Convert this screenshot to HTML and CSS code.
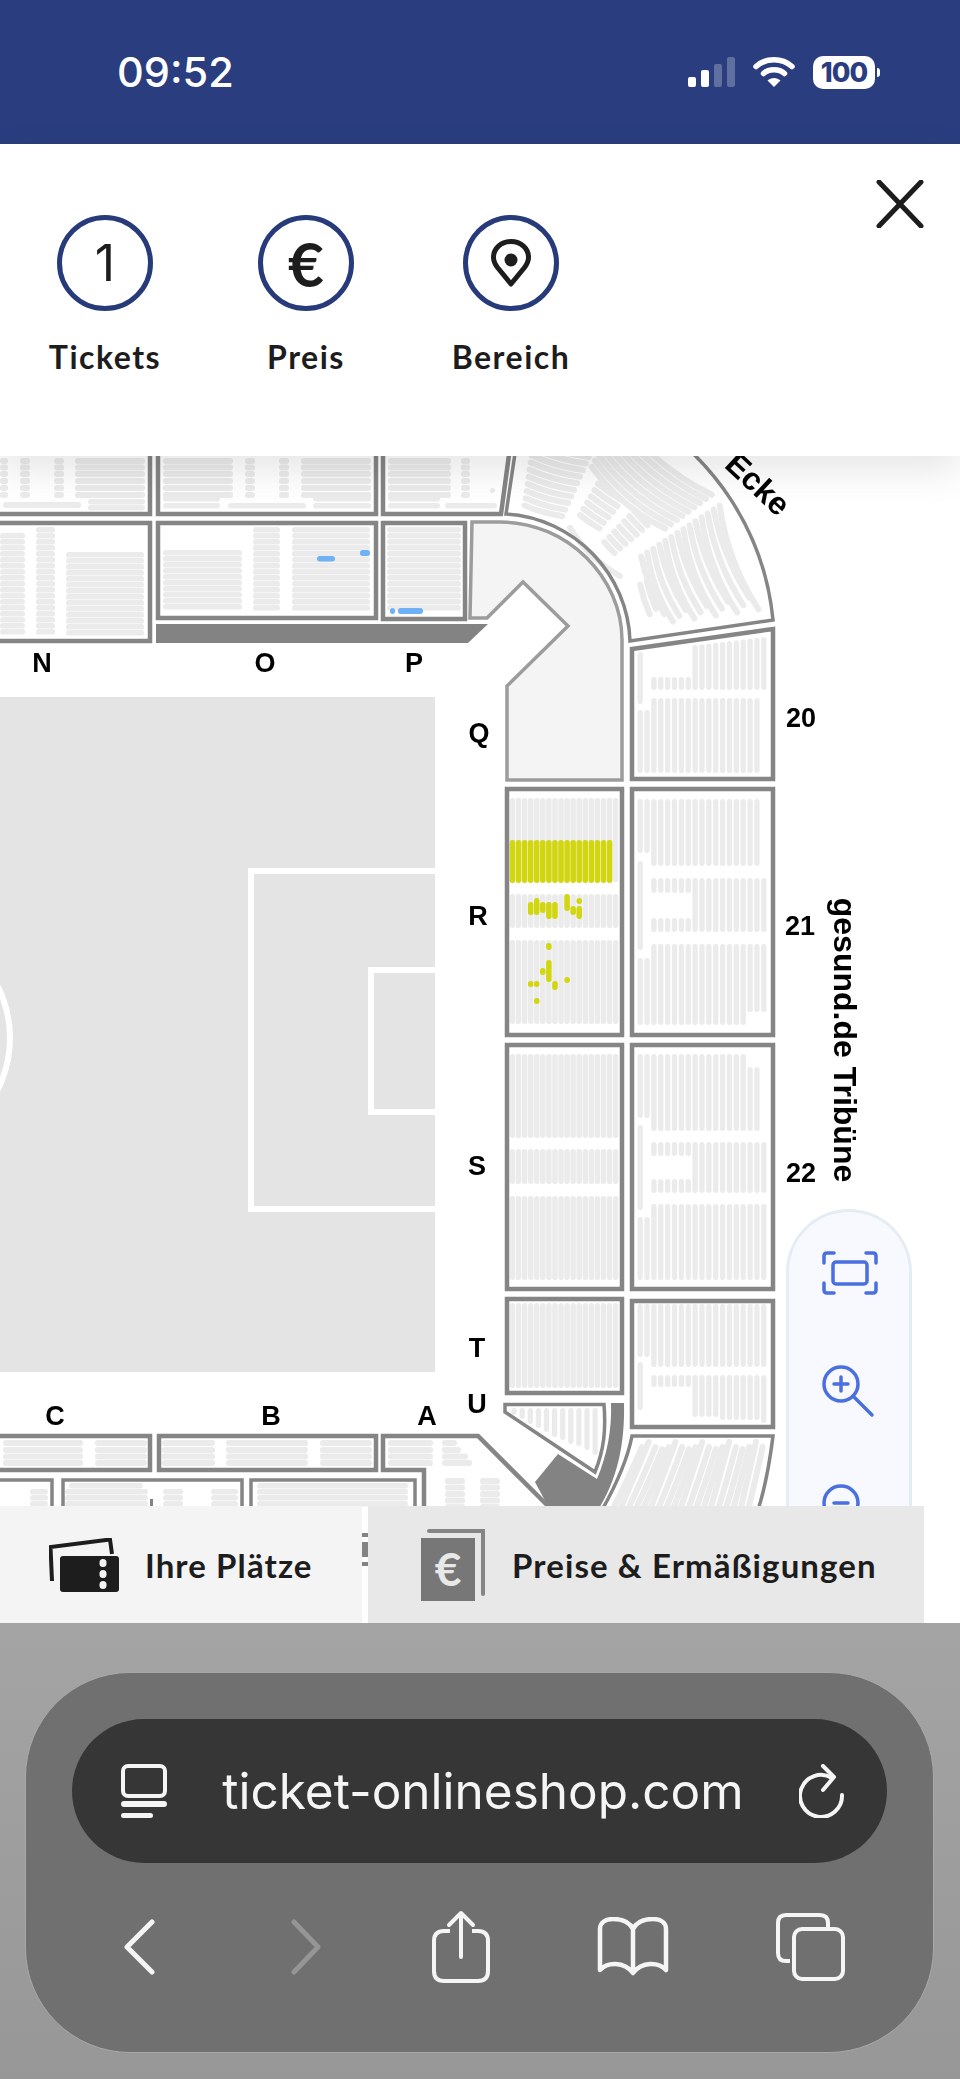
FILE: index.html

```html
<!DOCTYPE html>
<html lang="de">

<head>
  <meta charset="UTF-8">
  <meta name="viewport" content="width=device-width, initial-scale=1.0">
  <title>Saalplan</title>
  <link rel="stylesheet" href="styles.css">
</head>

<body>
  <header class="status-bar">
    <span class="status-time">09:52</span>
    <div class="status-icons">
      <svg class="signal" width="47" height="30" viewBox="0 0 47 30">
        <rect x="0" y="20" width="8" height="10" rx="2" fill="#fff"/>
        <rect x="13" y="13" width="8" height="17" rx="2" fill="#fff"/>
        <rect x="26" y="7" width="8" height="23" rx="2" fill="#5f6f9f"/>
        <rect x="39" y="0" width="8" height="30" rx="2" fill="#5f6f9f"/>
      </svg>
      <svg class="wifi" width="42" height="30" viewBox="0 0 42 30">
        <path d="M3 9.5C13 0.5 29 0.5 39 9.5" fill="none" stroke="#fff" stroke-width="5.5" stroke-linecap="round"/>
        <path d="M10.5 16.5C16 11.5 26 11.5 31.5 16.5" fill="none" stroke="#fff" stroke-width="5.5" stroke-linecap="round"/>
        <path d="M14.5 23.5C18 20 24 20 27.5 23.5L21 30Z" fill="#fff"/>
      </svg>
      <div class="battery">100</div>
    </div>
  </header>

  <section class="filter-panel">
    <div class="filters">
      <div class="filter">
        <div class="filter-circle"><span class="filter-count">1</span></div>
        <span class="filter-label">Tickets</span>
      </div>
      <div class="filter">
        <div class="filter-circle"><span class="filter-euro">€</span></div>
        <span class="filter-label">Preis</span>
      </div>
      <div class="filter">
        <div class="filter-circle">
          <svg width="40" height="48" viewBox="0 0 40 48">
            <path d="M20 45L6.5 28.5C3.5 24.5 2.5 21.5 2.5 18.5C2.5 9.5 10 2.5 20 2.5C30 2.5 37.5 9.5 37.5 18.5C37.5 21.5 36.5 24.5 33.5 28.5Z" fill="none" stroke="#1d1d1d" stroke-width="5" stroke-linejoin="round"/>
            <circle cx="20" cy="21" r="6.5" fill="#1d1d1d"/>
          </svg>
        </div>
        <span class="filter-label">Bereich</span>
      </div>
    </div>
    <svg class="close-icon" width="48" height="48" viewBox="0 0 48 48">
      <path d="M3 2L45 46M45 2L3 46" fill="none" stroke="#1d1d1d" stroke-width="5" stroke-linecap="round"/>
    </svg>
  </section>

  <main class="map">
    <svg class="map-svg" width="960" height="1167" viewBox="0 456 960 1167">
      <rect class="pitch" x="-10" y="697" width="445" height="675"/>
      <circle class="pitch-line" cx="-105" cy="1038" r="115"/>
      <rect class="pitch-line" x="251" y="871" width="190" height="338"/>
      <rect class="pitch-line" x="371" y="970" width="70" height="142"/>

      <g id="seats"></g>

      <!-- top stand -->
      <rect class="block" x="-10" y="440" width="160" height="74"/>
      <rect class="block" x="158" y="440" width="218" height="74"/>
      <path class="block" d="M383 440V514H501L511 440"/>
      <rect class="block" x="-10" y="523" width="160" height="118"/>
      <rect class="block" x="158" y="523" width="218" height="95"/>
      <rect class="block" x="383" y="523" width="82" height="96"/>
      <polygon class="dark" points="156,624 488,624 468,643 156,643"/>

      <!-- corner -->
      <path class="section-q" d="M472 522H500C568 522 622 578 622 640V780H507V686L568 626L523 582L487 618H470Z"/>
      <path class="block thin" d="M517 440L506 514C575 518 628 575 630 641L773 620A268 268 0 0 0 639 413"/>

      <!-- long side -->
      <path class="block" d="M632 649L773 629V779H632Z"/>
      <rect class="block" x="632" y="789" width="141" height="246"/>
      <rect class="block" x="632" y="1045" width="141" height="244"/>
      <rect class="block" x="632" y="1301" width="141" height="126"/>
      <rect class="block" x="507" y="789" width="115" height="246"/>
      <rect class="block" x="507" y="1045" width="115" height="244"/>
      <rect class="block" x="507" y="1299" width="115" height="94"/>

      <!-- bottom corner -->
      <path class="block thin" d="M505 1404.5H604C606 1430 604 1450 595 1472L505 1412Z"/>
      <path class="dark" d="M611 1403H624C625 1445 617 1480 598 1510H550L535 1482L558 1454L597 1479C607 1455 612 1430 611 1403Z"/>
      <path class="block thin" d="M602 1510C616 1485 627 1462 632 1436H773C770 1460 766 1485 758 1510"/>

      <!-- bottom stand -->
      <rect class="block" x="-10" y="1436" width="160" height="34"/>
      <rect class="block" x="159" y="1436" width="217" height="34"/>
      <path class="block" d="M550 1508L478 1436H383V1470H424V1520"/>
      <path class="block thin" d="M-10 1480H52V1520"/>
      <path class="block thin" d="M63 1520V1480H242V1520"/>
      <path class="block thin" d="M251 1520V1480H415V1520"/>
      <rect class="dark" x="150" y="1499" width="3" height="10"/>
      <rect class="dark" x="362" y="1533" width="6" height="4"/>
      <rect class="dark" x="362" y="1542" width="6" height="15"/>
      <rect class="dark" x="362" y="1562" width="6" height="4"/>

      <text class="map-label" x="42" y="672">N</text>
      <text class="map-label" x="265" y="672">O</text>
      <text class="map-label" x="414" y="672">P</text>
      <text class="map-label" x="479" y="742">Q</text>
      <text class="map-label" x="478" y="925">R</text>
      <text class="map-label" x="477" y="1175">S</text>
      <text class="map-label" x="477" y="1357">T</text>
      <text class="map-label" x="477" y="1413">U</text>
      <text class="map-label" x="55" y="1425">C</text>
      <text class="map-label" x="271" y="1425">B</text>
      <text class="map-label" x="427" y="1425">A</text>
      <text class="map-label" x="801" y="727">20</text>
      <text class="map-label" x="800" y="935">21</text>
      <text class="map-label" x="801" y="1182">22</text>
      <text class="map-label map-label-large" transform="translate(845 1040) rotate(90)" dy="11">gesund.de Tribüne</text>
      <text class="map-label map-label-large" transform="translate(758 484) rotate(43)" dy="11">Ecke</text>
    </svg>

    <div class="zoom-control">
      <svg width="56" height="44" viewBox="0 0 56 44" class="zoom-fit">
        <path d="M2 12V5Q2 2 5 2H12M44 2H51Q54 2 54 5V12M2 32V39Q2 42 5 42H12M44 42H51Q54 42 54 39V32" fill="none" stroke="#4a6fe0" stroke-width="3.5" stroke-linecap="round"/>
        <rect x="11" y="11" width="34" height="22" rx="3" fill="none" stroke="#4a6fe0" stroke-width="3.5"/>
      </svg>
      <svg width="54" height="54" viewBox="0 0 54 54" class="zoom-in">
        <circle cx="19" cy="19" r="17" fill="none" stroke="#4a6fe0" stroke-width="3.5"/>
        <path d="M12 19H26M19 12V26M31 31L50 50" fill="none" stroke="#4a6fe0" stroke-width="3.5" stroke-linecap="round"/>
      </svg>
      <svg width="54" height="54" viewBox="0 0 54 54" class="zoom-out">
        <circle cx="19" cy="19" r="17" fill="none" stroke="#4a6fe0" stroke-width="3.5"/>
        <path d="M12 19H26" fill="none" stroke="#4a6fe0" stroke-width="3.5" stroke-linecap="round"/>
      </svg>
    </div>

    <div class="tabs">
      <div class="tab tab-seats">
        <svg width="70" height="54" viewBox="0 0 70 54">
          <path d="M3 43L1.5 9L61 1.5L63 16" fill="none" stroke="#1d1d1d" stroke-width="4"/>
          <rect x="11" y="18" width="59" height="36" rx="3" fill="#1d1d1d"/>
          <rect x="50.5" y="21" width="7" height="8" rx="3.5" fill="#f4f4f4"/>
          <rect x="50.5" y="32" width="7" height="8" rx="3.5" fill="#f4f4f4"/>
          <rect x="50.5" y="43" width="7" height="8" rx="3.5" fill="#f4f4f4"/>
        </svg>
        <span class="tab-label">Ihre Plätze</span>
      </div>
      <div class="tab tab-prices">
        <svg width="64" height="72" viewBox="0 0 64 72">
          <path d="M8 2H62V65" fill="none" stroke="#858585" stroke-width="4" stroke-linecap="round"/>
          <rect x="0" y="9" width="54" height="63" fill="#777"/>
          <text class="tab-euro" x="27" y="57">€</text>
        </svg>
        <span class="tab-label">Preise &amp; Ermäßigungen</span>
      </div>
    </div>
  </main>

  <footer class="browser">
    <div class="browser-card">
      <div class="url-bar">
        <svg width="46" height="54" viewBox="0 0 46 54">
          <rect x="2" y="2" width="42" height="30" rx="5" fill="none" stroke="#f5f5f5" stroke-width="4"/>
          <rect x="0" y="37" width="46" height="6" rx="3" fill="#f5f5f5"/>
          <rect x="0" y="49" width="32" height="5" rx="2.5" fill="#f5f5f5"/>
        </svg>
        <span class="url-text">ticket-onlineshop.com</span>
        <svg width="46" height="54" viewBox="0 0 46 54">
          <path d="M33 13A21 21 0 1 0 43 30" fill="none" stroke="#f5f5f5" stroke-width="4" stroke-linecap="round" transform="translate(0 1)"/>
          <path d="M24 2L35 13L24 26" fill="none" stroke="#f5f5f5" stroke-width="4" stroke-linecap="round" stroke-linejoin="round"/>
        </svg>
      </div>
      <div class="toolbar">
        <svg class="nav-back" width="31" height="56" viewBox="0 0 31 56">
          <path d="M28 3L3 28L28 53" fill="none" stroke="#f5f5f5" stroke-width="5" stroke-linecap="round" stroke-linejoin="round"/>
        </svg>
        <svg class="nav-forward" width="30" height="56" viewBox="0 0 30 56">
          <path d="M3 3L27 28L3 53" fill="none" stroke="#959595" stroke-width="5" stroke-linecap="round" stroke-linejoin="round"/>
        </svg>
        <svg width="58" height="73" viewBox="0 0 58 73">
          <path d="M18 21H12Q2 21 2 31V61Q2 71 12 71H46Q56 71 56 61V31Q56 21 46 21H40" fill="none" stroke="#f5f5f5" stroke-width="4"/>
          <path d="M29 47V3M17 15L29 3L41 15" fill="none" stroke="#f5f5f5" stroke-width="4" stroke-linecap="round" stroke-linejoin="round"/>
        </svg>
        <svg width="72" height="59" viewBox="0 0 72 59">
          <path d="M36 12C32 4 24 2 16 2C8 2 3 6 3 12V53C10 45 27 44 36 56C45 44 62 45 69 53V12C69 6 64 2 56 2C48 2 40 4 36 12V54" fill="none" stroke="#f5f5f5" stroke-width="4.5" stroke-linejoin="round"/>
        </svg>
        <svg width="69" height="68" viewBox="0 0 69 68">
          <path d="M14 48H10Q2 48 2 40V10Q2 2 10 2H44Q52 2 52 10V14" fill="none" stroke="#f5f5f5" stroke-width="4"/>
          <rect x="18" y="16" width="49" height="50" rx="8" fill="none" stroke="#f5f5f5" stroke-width="4"/>
        </svg>
      </div>
    </div>
  </footer>

  <script src="map.js"></script>
</body>

</html>
```

FILE: styles.css

```css
* {
  box-sizing: border-box;
}

body {
  margin: 0;
  width: 960px;
  height: 2079px;
  overflow: hidden;
  background-color: #fff;
  font-family: Lato, "Liberation Sans", sans-serif;
  color: #1d1d1d;
}

/* status bar */
.status-bar {
  display: flex;
  justify-content: space-between;
  align-items: center;
  height: 144px;
  padding: 0 85px 0 117px;
  background-color: #2a3d7e;
  color: #fff;
}

.status-time {
  font-family: Inter, sans-serif;
  font-size: 41.5px;
  font-weight: 500;
}

.status-icons {
  display: flex;
  align-items: center;
  gap: 18px;
}

.battery {
  position: relative;
  width: 62px;
  height: 33px;
  border-radius: 10px;
  background-color: #fff;
  color: #2a3d7e;
  font-family: Inter, sans-serif;
  font-size: 27px;
  font-weight: 800;
  line-height: 33px;
  text-align: center;
  letter-spacing: -1px;
}

.battery::after {
  content: "";
  position: absolute;
  left: 64px;
  top: 12px;
  width: 3px;
  height: 9px;
  border-radius: 0 3px 3px 0;
  background-color: #fff;
}

/* filter panel */
.filter-panel {
  position: relative;
  z-index: 2;
  display: flex;
  justify-content: space-between;
  align-items: flex-start;
  height: 312px;
  padding: 36px 36px 0 35px;
  background-color: #fff;
  box-shadow: 0 14px 36px rgba(0, 0, 0, 0.1);
}

.filters {
  display: grid;
  grid-template-columns: 201px 205px 140px;
  padding-top: 35px;
}

.filter {
  display: flex;
  flex-direction: column;
  align-items: center;
  width: 140px;
}

.filter-circle {
  display: flex;
  justify-content: center;
  align-items: center;
  width: 96px;
  height: 96px;
  border: 5px solid #273a7a;
  border-radius: 50%;
}

.filter-count {
  font-family: Inter, sans-serif;
  font-size: 50px;
  font-weight: 400;
  line-height: 1;
}

.filter-euro {
  font-size: 62px;
  font-weight: 700;
  line-height: 1;
}

.filter-label {
  margin-top: 28px;
  font-size: 32px;
  font-weight: 700;
  line-height: 36px;
  letter-spacing: 1.5px;
}

/* map */
.map {
  position: relative;
  height: 1167px;
  overflow: hidden;
}

.map-svg {
  display: block;
  filter: blur(0.4px);
}

.pitch {
  fill: #e4e4e4;
}

.pitch-line {
  fill: none;
  stroke: #fff;
  stroke-width: 6;
}

.block {
  fill: none;
  stroke: #858585;
  stroke-width: 4.5;
}

.block.thin {
  stroke-width: 3.5;
}

.dark {
  fill: #838383;
}

.section-q {
  fill: #f4f4f4;
  stroke: #9c9c9c;
  stroke-width: 3.5;
}

.seat {
  fill: #ebebeb;
}

.seat-arc {
  fill: none;
  stroke: #ebebeb;
  stroke-width: 6;
  stroke-linecap: round;
}

.seat-blue {
  fill: #6eb1f5;
}

.seat-yellow {
  fill: #d2d60e;
}

.map-label {
  font-family: "Liberation Sans", Arial, sans-serif;
  font-size: 27px;
  font-weight: 700;
  text-anchor: middle;
  fill: #000;
}

.map-label-large {
  font-size: 32px;
}

.zoom-control {
  position: absolute;
  left: 786px;
  top: 753px;
  display: flex;
  flex-direction: column;
  align-items: flex-start;
  width: 126px;
  height: 340px;
  padding: 39px 0 0 33px;
  border: 3px solid #e6ecf4;
  border-bottom: 0;
  border-radius: 63px 63px 0 0;
  background-color: #f7f9fe;
}

.zoom-in {
  margin-top: 70px;
}

.zoom-out {
  margin-top: 65px;
}

.tabs {
  position: absolute;
  left: 0;
  bottom: 0;
  display: flex;
  gap: 6px;
  height: 117px;
}

.tab {
  display: flex;
  align-items: center;
}

.tab-seats {
  width: 362px;
  padding-left: 49px;
  gap: 26px;
  background-color: #f4f4f4;
}

.tab-prices {
  width: 556px;
  padding-left: 53px;
  gap: 27px;
  background-color: #e8e8e8;
}

.tab-label {
  font-size: 33px;
  font-weight: 700;
  letter-spacing: 1.1px;
}

.tab-euro {
  font-family: Lato, sans-serif;
  font-size: 46px;
  font-weight: 700;
  text-anchor: middle;
  fill: #e8e8e8;
}

/* safari toolbar */
.browser {
  height: 456px;
  padding: 49px 26px 0 25px;
  background: linear-gradient(#a4a4a4, #979797);
}

.browser-card {
  height: 381px;
  padding: 46px 46px 0;
  border: 1.5px solid #a9a9a9;
  border-radius: 105px;
  background-color: #707070;
}

.url-bar {
  display: flex;
  justify-content: space-between;
  align-items: center;
  height: 144px;
  padding: 0 42px 0 49px;
  border-radius: 72px;
  background-color: #363636;
}

.url-text {
  font-family: Inter, sans-serif;
  font-size: 49.5px;
  color: #f5f5f5;
}

.toolbar {
  display: flex;
  align-items: center;
  gap: 107px;
  height: 73px;
  margin-top: 47px;
  padding-left: 52px;
}

.nav-back {
  margin-right: 29px;
}

.nav-forward {
  margin-right: 4px;
}
```

FILE: map.js

```js
var out = "";
var CX = 505;
var CY = 645;

function seat(x, y, w, h, cls) {
  out += '<rect class="' + (cls || "seat") + '" x="' + x + '" y="' + y + '" width="' + w + '" height="' + h + '" rx="2.7"/>';
}

// horizontal rows, pitch in px
function rows(x1, x2, y1, y2, pitch) {
  for (var y = y1; y + 5 <= y2; y += pitch) {
    seat(x1, y, x2 - x1, pitch - 0.4);
  }
}

function arc(r, a1, a2) {
  var p1 = [CX + r * Math.cos(a1 * Math.PI / 180), CY - r * Math.sin(a1 * Math.PI / 180)];
  var p2 = [CX + r * Math.cos(a2 * Math.PI / 180), CY - r * Math.sin(a2 * Math.PI / 180)];
  out += '<path class="seat-arc" d="M' + p1[0] + " " + p1[1] + "A" + r + " " + r + " 0 0 0 " + p2[0] + " " + p2[1] + '"/>';
}

// columns of the outer blocks on the long side
function outerX(i) {
  return 637.5 + 6.87 * i;
}

function outerCols(from, to, y1, y2) {
  for (var i = from; i <= to; i++) {
    seat(outerX(i), y1, 5.3, y2 - y1);
  }
}

// columns of the inner blocks on the long side
function innerX(i) {
  return 509.7 + 6.07 * i;
}

function innerCols(y1, y2) {
  for (var i = 0; i < 18; i++) {
    seat(innerX(i), y1, 5.5, y2 - y1);
  }
}

function yellow(i, y1, y2) {
  seat(innerX(i), y1, 5.5, y2 - y1, "seat-yellow");
}

var i;

// top stand, first row
var topRows = [458, 464.5, 471, 478, 485, 492];
topRows.forEach(function (y) {
  [[0, 8], [20, 30], [54, 64], [75, 145], [163, 233], [245, 255], [279, 289], [301, 371], [388, 451], [461, 470]].forEach(function (r) {
    seat(r[0], y, r[1] - r[0], 6);
  });
});
seat(88, 499, 57, 5.5);
seat(88, 505, 57, 5.5);
seat(3, 502, 78, 6);
seat(163, 496, 57, 5.5);
seat(163, 503, 57, 5.5);
seat(228, 503, 78, 5.5);
seat(313, 496, 58, 5.5);
seat(313, 503, 58, 5.5);
seat(388, 496, 52, 5.5);
seat(388, 503, 52, 5.5);
seat(445, 503, 52, 5.5);
seat(490, 488, 5, 5);

// top stand, second row
rows(0, 25, 533, 636, 6);
rows(36, 55, 527, 636, 6);
rows(66, 144, 552, 636, 6);
rows(163, 242, 550, 614, 6);
rows(253, 280, 527, 614, 6);
rows(292, 370, 527, 614, 6);
rows(387, 461, 527, 614, 6);
seat(317, 556, 18, 5.5, "seat-blue");
seat(360, 550, 10, 6, "seat-blue");
seat(390, 608, 5, 6, "seat-blue");
seat(398, 608, 25, 6, "seat-blue");

// corner stand
for (i = 0; i < 16; i++) {
  var r = 148 + i * 7.2;
  var end = 8 + (i % 3) * 1.5 + (i < 2 ? 4 : 0);
  arc(r, i < 2 ? 24 : 33, end);
}
for (i = 0; i < 9; i++) {
  arc(198 + i * 7.2, 64, 36);
}
for (i = 0; i < 7; i++) {
  arc(143 + i * 7.2, 46, 40);
}
for (i = 0; i < 6; i++) {
  arc(150 + i * 7.2, 60, 51);
}
for (i = 0; i < 10; i++) {
  arc(141 + i * 7.2, 82, 66);
}
arc(134, 61, 31);

// block 20
outerCols(0, 0, 652, 704);
outerCols(2, 7, 677, 690);
for (i = 8; i <= 18; i++) {
  seat(outerX(i), 645 - (i - 8) * 0.8, 5.3, 690 - 645 + (i - 8) * 0.8);
}
outerCols(2, 17, 698, 773);
outerCols(0, 1, 710, 773);

// block 21
outerCols(0, 1, 799, 853);
outerCols(2, 17, 799, 866);
outerCols(0, 0, 861, 950);
outerCols(2, 7, 878, 893);
outerCols(2, 7, 918, 932);
outerCols(8, 18, 878, 932);
outerCols(2, 15, 944, 1025);
outerCols(1, 1, 958, 1025);
outerCols(0, 0, 958, 1025);
outerCols(16, 18, 944, 1012);

// block 22
outerCols(0, 1, 1054, 1118);
outerCols(2, 15, 1054, 1131);
outerCols(16, 17, 1067, 1131);
outerCols(0, 0, 1125, 1210);
outerCols(2, 7, 1142, 1156);
outerCols(2, 7, 1179, 1193);
outerCols(8, 18, 1142, 1193);
outerCols(2, 18, 1204, 1280);
outerCols(0, 1, 1217, 1280);

// block 23
outerCols(0, 1, 1304, 1357);
outerCols(2, 18, 1304, 1367);
outerCols(0, 0, 1362, 1410);
outerCols(2, 7, 1375, 1387);
outerCols(8, 11, 1375, 1417);
outerCols(12, 17, 1375, 1420);
outerCols(18, 18, 1375, 1423);

// inner blocks
innerCols(798, 882);
innerCols(894, 928);
innerCols(940, 1024);
innerCols(1054, 1138);
innerCols(1149, 1184);
innerCols(1196, 1280);
innerCols(1303, 1388);

// selected seats in block R
for (i = 0; i < 17; i++) {
  yellow(i, 840, 883);
}
yellow(3, 902, 915);
yellow(4, 898, 915);
yellow(5, 902, 913);
yellow(6, 902, 919);
yellow(7, 902, 919);
yellow(9, 894, 911);
yellow(10, 906, 915);
yellow(11, 898, 904);
yellow(11, 906, 919);
yellow(6, 943, 950);
yellow(6, 960, 982);
yellow(5, 968, 975);
yellow(3, 981, 987);
yellow(4, 981, 987);
yellow(7, 981, 990);
yellow(9, 977, 983);
yellow(4, 998, 1004);

// seats in the small block under T
var uEnds = [1415, 1419, 1424, 1428, 1432, 1437, 1440, 1444, 1446, 1450, 1455];
for (i = 0; i < 11; i++) {
  seat(511.5 + i * 8.1, 1408, 5.2, uEnds[i] - 1408);
}

// corner stand at the bottom
for (i = 0; i < 19; i++) {
  var topX = 642 + i * 6.7;
  var topY = 1447 + (i % 4 === 1 ? -5 : i % 4 === 3 ? 2 : 0);
  var tilt = 32 - i * 0.9;
  out += '<path class="seat-arc" d="M' + topX + " " + topY + "Q" + (topX - tilt * 0.4) + " " + (topY + 30) + " " + (topX - tilt) + " 1515" + '"/>';
}

// bottom stand
[1440, 1447, 1453.5, 1460].forEach(function (y) {
  [[3, 83], [95, 147], [162, 215], [226, 308], [320, 372], [388, 433]].forEach(function (s) {
    seat(s[0], y, s[1] - s[0], 6);
  });
});
seat(442, 1440, 15, 6);
seat(442, 1447, 19, 6);
seat(442, 1453.5, 26, 6);
seat(442, 1460, 30, 6);

seat(69, 1483, 74, 5.5);
seat(257, 1483, 151, 5.5);
[1489, 1495, 1501].forEach(function (y) {
  [[30, 48], [65, 148], [163, 183], [211, 238], [257, 408]].forEach(function (s) {
    seat(s[0], y, s[1] - s[0], 5.5);
  });
});
rows(445, 465, 1478, 1510, 6.5);
rows(480, 500, 1478, 1510, 6.5);

document.getElementById("seats").innerHTML = out;
```
